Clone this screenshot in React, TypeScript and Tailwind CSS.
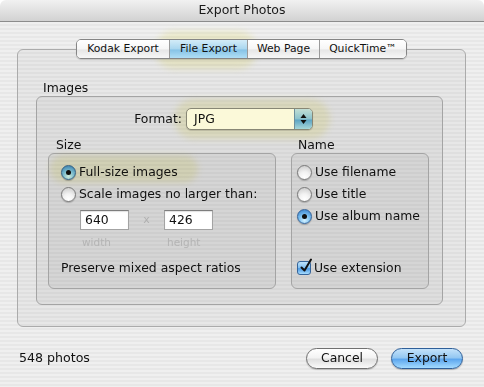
import type { ReactNode } from 'react';

function Radio({ checked }: { checked?: boolean }) {
  if (checked) {
    return (
      <span className="flex h-[15px] w-[15px] shrink-0 items-center justify-center rounded-full border border-[#35649a] bg-[image:radial-gradient(circle_at_50%_80%,#d4f1ff_0%,#7cc0f0_45%,#2f78c8_100%)] shadow-[0_1px_1px_rgba(0,0,0,0.25)]">
        <span className="h-[5px] w-[5px] rounded-full bg-[#101010]" />
      </span>
    );
  }
  return (
    <span className="h-[15px] w-[15px] shrink-0 rounded-full border border-[#7a7a7a] bg-[image:radial-gradient(circle_at_50%_85%,#ffffff_0%,#f2f2f2_40%,#c6c6c6_100%)] shadow-[0_1px_1px_rgba(0,0,0,0.2)]" />
  );
}

function Checkbox() {
  return (
    <span className="relative h-[14px] w-[14px] shrink-0 rounded-[3px] border border-[#35649a] bg-[image:linear-gradient(to_bottom,#bfe3fb_0%,#7dbdf0_50%,#4b98e2_55%,#a6dcff_100%)]">
      <svg className="absolute left-[1px] top-[-4px]" width="15" height="16" viewBox="0 0 15 16">
        <path d="M2.5 9.5 L5.5 12.5 L12 1.5" fill="none" stroke="#111" strokeWidth="2" strokeLinecap="round" strokeLinejoin="round" />
      </svg>
    </span>
  );
}

function Option({ checked, children }: { checked?: boolean; children: ReactNode }) {
  return (
    <div className="flex h-[22px] items-center gap-[3px]">
      <Radio checked={checked} />
      <span>{children}</span>
    </div>
  );
}

function Field({ value }: { value: string }) {
  return (
    <div className="flex h-[20px] w-[49px] items-center border border-[#a3a3a3] border-t-[#7d7d7d] bg-white px-[4px] shadow-[inset_0_1px_1px_rgba(0,0,0,0.12)]">
      {value}
    </div>
  );
}

const tabs = [
  { label: 'Kodak Export', w: 'w-[92px]' },
  { label: 'File Export', w: 'w-[78px]', active: true },
  { label: 'Web Page', w: 'w-[72px]' },
  { label: 'QuickTime™', w: 'w-[87px]' },
];

export default function App() {
  return (
    <div className="relative h-[387px] w-[484px] overflow-hidden bg-white font-['DejaVu_Sans',sans-serif] text-[12.4px] text-[#111]">
      <div className="flex h-full flex-col overflow-hidden rounded-t-[6px]">
        <div className="flex h-[22px] shrink-0 items-center justify-center border-b border-[#8c8c8c] bg-[image:linear-gradient(to_bottom,#f1f1f1,#d2d2d2)] text-[12.5px] text-[#1a1a1a]">
          Export Photos
        </div>

        <div className="flex flex-1 flex-col bg-[image:repeating-linear-gradient(to_bottom,#efefef_0px,#efefef_2px,#e7e7e7_2px,#e7e7e7_4px)] pl-[17px] pr-[18px] pt-[17px]">
          {/* tab control */}
          <div className="relative z-10 flex justify-center">
            <div className="flex h-[20px] overflow-hidden rounded-[5px] border border-[#858585] shadow-[0_1px_1px_rgba(0,0,0,0.15)]">
              {tabs.map((t, i) => (
                <div
                  key={t.label}
                  className={`flex items-center justify-center text-[10.8px] ${t.w} ${i > 0 ? 'border-l border-[#9a9a9a]' : ''} ${
                    t.active
                      ? 'bg-[image:linear-gradient(to_bottom,#d3ecf8_0%,#a9d6ef_50%,#86c3e6_55%,#b0def5_100%)]'
                      : 'bg-[image:linear-gradient(to_bottom,#ffffff_0%,#f6f6f6_50%,#e6e6e6_55%,#f7f7f7_100%)]'
                  }`}
                >
                  {t.label}
                </div>
              ))}
            </div>
          </div>

          {/* tab panel */}
          <div className="-mt-[10px] h-[278px] rounded-[6px] border border-[#ababab] bg-black/[0.03] pl-[18px] pr-[22px] pt-[30px]">
            <div className="h-[15px] pl-[7px] leading-[15px]">Images</div>
            <div className="mt-[1px] h-[209px] rounded-[6px] border border-[#a4a4a4] bg-black/[0.035] pt-[11px]">
              <div className="flex h-[22px] items-center">
                <span className="w-[145px] text-right">Format:</span>
                <div className="ml-[4px] flex h-[22px] w-[127px] overflow-hidden rounded-[5px] border border-[#8a8a8a] bg-white shadow-[0_1px_1px_rgba(0,0,0,0.15)]">
                  <span className="flex flex-1 items-center pl-[7px]">JPG</span>
                  <span className="flex w-[18px] items-center justify-center border-l border-[#6f93b8] bg-[image:linear-gradient(to_bottom,#c6e5fa_0%,#8ec7f0_50%,#5ea8e6_55%,#a9dcff_100%)]">
                    <svg width="7" height="12" viewBox="0 0 7 12">
                      <path d="M3.5 1 L6.5 5 L0.5 5 Z M0.5 7 L6.5 7 L3.5 11 Z" fill="#111" />
                    </svg>
                  </span>
                </div>
              </div>

              <div className="mt-[7px] flex gap-[15px] pl-[11px]">
                <div className="w-[228px]">
                  <div className="h-[15px] pl-[8px] leading-[15px]">Size</div>
                  <div className="mt-[1px] h-[136px] rounded-[6px] border border-[#a4a4a4] bg-black/[0.04] pl-[12px] pt-[7px]">
                    <Option checked>Full-size images</Option>
                    <Option>Scale images no larger than:</Option>
                    <div className="mt-[5px] flex items-center pl-[19px]">
                      <Field value="640" />
                      <span className="w-[35px] text-center text-[11px] text-[#b0b0b0]">x</span>
                      <Field value="426" />
                    </div>
                    <div className="mt-[6px] flex h-[14px] items-center pl-[21px] text-[10.5px] text-[#b4b4b4]">
                      <span className="w-[85px]">width</span>
                      <span>height</span>
                    </div>
                    <div className="mt-[10px] flex h-[16px] items-center">Preserve mixed aspect ratios</div>
                  </div>
                </div>

                <div className="w-[138px]">
                  <div className="h-[15px] pl-[7px] leading-[15px]">Name</div>
                  <div className="mt-[1px] h-[136px] rounded-[6px] border border-[#a4a4a4] bg-black/[0.04] pl-[5px] pt-[7px]">
                    <Option>Use filename</Option>
                    <Option>Use title</Option>
                    <Option checked>Use album name</Option>
                    <div className="mt-[31px] flex h-[20px] items-center gap-[3px]">
                      <Checkbox />
                      <span>Use extension</span>
                    </div>
                  </div>
                </div>
              </div>
            </div>
          </div>

          {/* footer */}
          <div className="mt-[21px] flex h-[21px] items-center justify-between pl-[2px] pr-[3px]">
            <span className="text-[12.6px]">548 photos</span>
            <div className="flex gap-[13px]">
              <button className="flex h-[21px] w-[72px] items-center justify-center rounded-full border border-[#707070] bg-[image:linear-gradient(to_bottom,#ffffff_0%,#f3f3f3_45%,#e0e0e0_55%,#fafafa_100%)] shadow-[0_1px_1px_rgba(0,0,0,0.2)]">
                Cancel
              </button>
              <button className="flex h-[21px] w-[72px] items-center justify-center rounded-full border border-[#2f5f99] bg-[image:linear-gradient(to_bottom,#c4e2fa_0%,#95c8f2_45%,#5ea7ee_55%,#a4dbff_100%)] shadow-[0_1px_1px_rgba(0,0,0,0.25)]">
                Export
              </button>
            </div>
          </div>
        </div>
      </div>

      {/* yellow highlight marks */}
      <div className="pointer-events-none absolute left-[155px] top-[31px] h-[38px] w-[102px] rounded-full bg-[#fbf9d9] mix-blend-multiply blur-[3px]" />
      <div className="pointer-events-none absolute left-[174px] top-[99px] h-[40px] w-[156px] rounded-full bg-[#fbf9d9] mix-blend-multiply blur-[3px]" />
      <div className="pointer-events-none absolute left-[50px] top-[155px] h-[28px] w-[148px] rounded-full bg-[#fbf9d9] mix-blend-multiply blur-[3px]" />
    </div>
  );
}
